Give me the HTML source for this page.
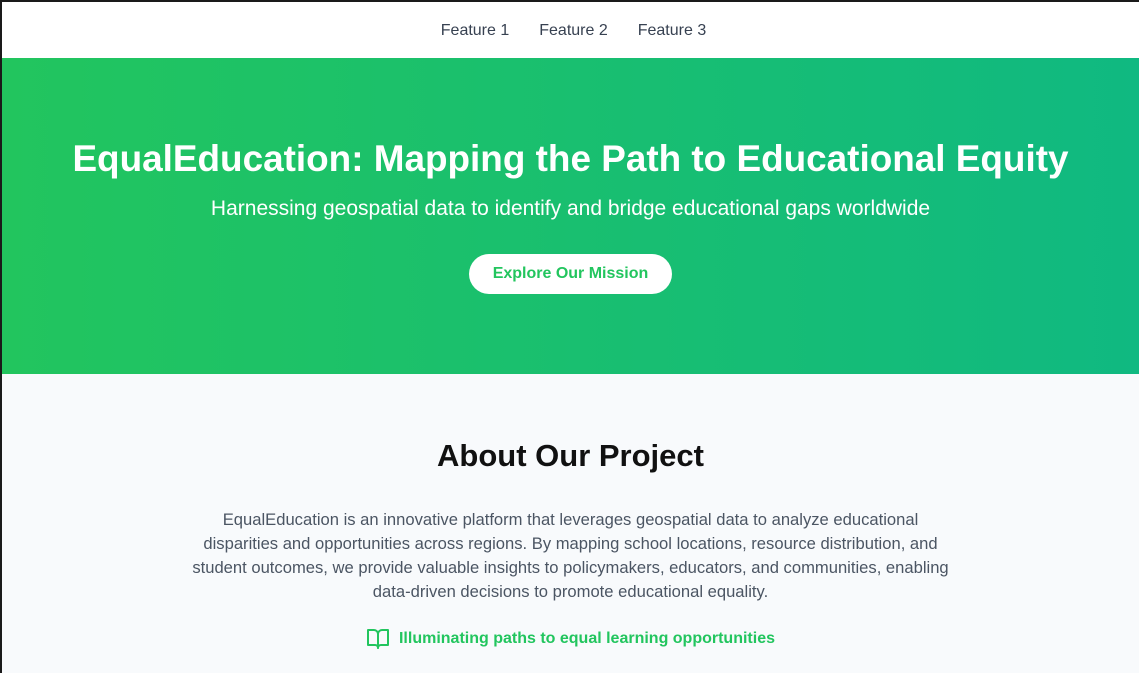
<!DOCTYPE html>
<html><head><meta charset="utf-8"><style>
*{margin:0;padding:0;box-sizing:border-box}
html,body{width:1139px;height:673px;overflow:hidden}
body{font-family:"Liberation Sans",sans-serif;background:#f8fafc;border-top:2px solid #1a1a1a;border-left:2px solid #1a1a1a}
nav{height:56px;background:#fff;display:flex;justify-content:center;align-items:center;gap:30px;font-size:16px;color:#374151;padding-left:6px;padding-top:2px}
.hero{height:316px;background:linear-gradient(90deg,#22c55e,#10b981);color:#fff;text-align:center;padding-top:80px}
.hero h1{font-size:36.9px;font-weight:bold;line-height:42px}
.hero p{font-size:21px;margin-top:16px;line-height:26px}
.btn{display:inline-block;margin-top:32px;background:#fff;color:#22c55e;font-weight:bold;font-size:16px;border-radius:20px;padding:11px 24px;height:40px;white-space:nowrap}
.about{text-align:center;padding-top:64px}
.about h2{font-size:31px;font-weight:bold;color:#111;line-height:36px}
.about p{width:770px;margin:0 auto;margin-top:34px;font-size:16.6px;line-height:24px;color:#4b5563}
.tag{margin-top:24px;color:#22c55e;font-weight:bold;font-size:16px;display:flex;justify-content:center;align-items:center;gap:9px}
</style></head><body>
<nav><span>Feature 1</span><span>Feature 2</span><span>Feature 3</span></nav>
<div class="hero"><h1>EqualEducation: Mapping the Path to Educational Equity</h1>
<p>Harnessing geospatial data to identify and bridge educational gaps worldwide</p>
<div class="btn">Explore Our Mission</div></div>
<div class="about"><h2>About Our Project</h2>
<p>EqualEducation is an innovative platform that leverages geospatial data to analyze educational disparities and opportunities across regions. By mapping school locations, resource distribution, and student outcomes, we provide valuable insights to policymakers, educators, and communities, enabling data-driven decisions to promote educational equality.</p>
<div class="tag"><svg width="24" height="22" viewBox="0 0 24 22" fill="none" stroke="#22c55e" stroke-width="2" stroke-linejoin="round"><path d="M2 2h6a4 4 0 0 1 4 4v14a3 3 0 0 0-3-3H2z"/><path d="M22 2h-6a4 4 0 0 0-4 4v14a3 3 0 0 1 3-3h7z"/></svg>Illuminating paths to equal learning opportunities</div>
</div>
</body></html>
